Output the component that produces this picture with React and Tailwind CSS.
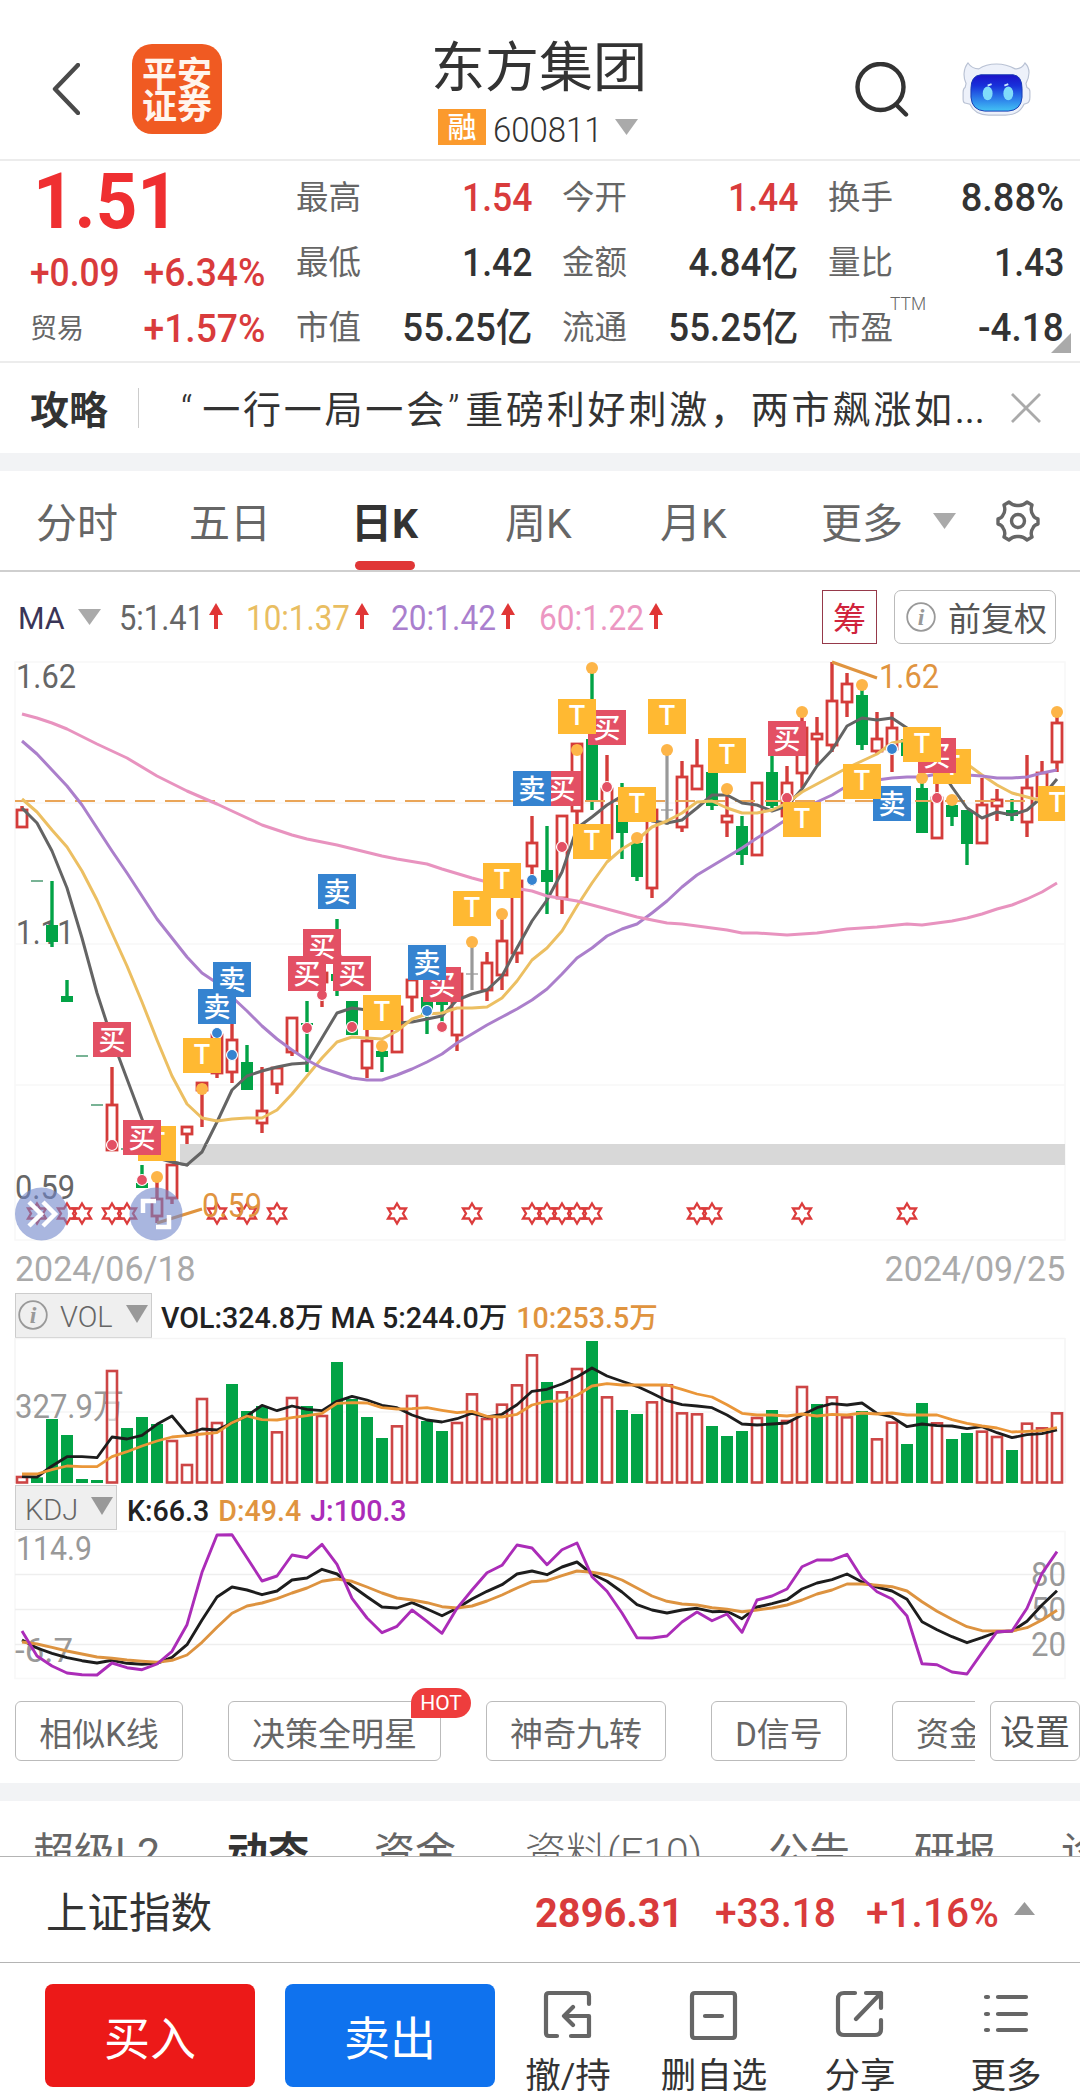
import React from "react";

const RED = "#d43c3a";
const GREEN = "#02a346";

const quotes = [
  { label: "最高", value: "1.54", color: "text-[#d93b3c]", scale: "scale-x-[0.91]" },
  { label: "今开", value: "1.44", color: "text-[#d93b3c]", scale: "scale-x-[0.91]" },
  { label: "换手", value: "8.88%", color: "text-[#333]", scale: "scale-x-[0.975]" },
  { label: "最低", value: "1.42", color: "text-[#333]", scale: "scale-x-[0.91]" },
  { label: "金额", value: "4.84亿", color: "text-[#333]", scale: "scale-x-[0.945]" },
  { label: "量比", value: "1.43", color: "text-[#333]", scale: "scale-x-[0.91]" },
  { label: "市值", value: "55.25亿", color: "text-[#333]", scale: "scale-x-[0.94]" },
  { label: "流通", value: "55.25亿", color: "text-[#333]", scale: "scale-x-[0.94]" },
  { label: "市盈", value: "-4.18", color: "text-[#333]", scale: "scale-x-[0.945]", sup: "TTM" },
];

// [high, top, bottom, low, type]  r = up, g = down, x = doji, - = limit line
const candles = [
  [166, 169, 187, 187, "r"], [241, 241, 241, 241, "-"], [241, 285, 302, 307, "g"], [340, 356, 362, 362, "g"],
  [416, 416, 416, 416, "-"], [465, 465, 465, 465, "-"], [427, 464, 510, 510, "r"], [509, 509, 509, 509, "-"],
  [525, 543, 548, 548, "g"], [540, 558, 576, 583, "r"], [524, 524, 558, 564, "r"], [486, 486, 494, 504, "r"],
  [442, 442, 450, 487, "r"], [393, 394, 433, 438, "r"], [380, 399, 432, 443, "r"], [405, 422, 450, 450, "g"],
  [427, 470, 483, 493, "r"], [426, 427, 444, 454, "r"], [377, 377, 412, 416, "r"], [361, 383, 385, 432, "g"],
  [315, 332, 342, 367, "r"], [279, 334, 341, 356, "g"], [361, 361, 395, 395, "g"], [388, 400, 428, 438, "r"],
  [406, 411, 417, 432, "g"], [366, 366, 412, 412, "r"], [339, 339, 357, 372, "r"], [357, 357, 375, 394, "g"],
  [355, 360, 365, 392, "g"], [333, 333, 395, 411, "r"], [302, 334, 334, 350, "x"], [312, 322, 350, 361, "r"],
  [274, 300, 335, 350, "r"], [240, 240, 313, 323, "r"], [176, 202, 226, 246, "r"], [186, 230, 242, 274, "g"],
  [175, 175, 258, 274, "r"], [103, 103, 171, 185, "r"], [28, 99, 160, 170, "g"], [115, 148, 198, 198, "r"],
  [143, 165, 193, 219, "g"], [198, 203, 237, 241, "g"], [169, 169, 248, 258, "r"], [110, 170, 170, 185, "x"],
  [121, 136, 187, 192, "r"], [99, 125, 149, 149, "r"], [132, 132, 166, 170, "g"], [149, 175, 182, 197, "r"],
  [176, 186, 215, 225, "g"], [142, 142, 215, 215, "r"], [115, 132, 166, 168, "g"], [126, 142, 176, 176, "r"],
  [72, 87, 133, 148, "r"], [77, 93, 99, 125, "r"], [22, 60, 105, 112, "r"], [33, 43, 62, 77, "r"],
  [45, 55, 105, 110, "g"], [72, 98, 111, 114, "r"], [72, 87, 109, 132, "r"], [99, 99, 116, 116, "g"],
  [138, 148, 193, 193, "g"], [140, 157, 198, 198, "r"], [160, 165, 177, 186, "g"], [170, 170, 204, 225, "g"],
  [138, 164, 203, 203, "r"], [149, 159, 166, 181, "r"], [159, 170, 176, 181, "g"], [115, 147, 182, 197, "r"],
  [121, 132, 156, 160, "r"], [72, 82, 122, 132, "r"],
];

const ma5 = "22,168 37,183 52,211 67,248 82,298 97,353 112,399 127,439 142,479 157,518 172,522 187,525 202,512 217,482 232,450 247,436 262,431 277,427 292,424 307,423 322,398 337,373 352,368 367,370 382,378 397,383 412,382 427,379 442,376 457,360 472,354 487,350 502,336 517,308 532,281 547,260 562,232 577,188 592,177 607,165 622,156 637,165 652,181 667,183 682,180 697,168 712,155 727,155 742,163 757,165 772,171 787,166 802,149 817,126 832,110 847,86 862,78 877,80 892,78 907,88 922,104 937,124 952,147 967,168 982,178 997,172 1012,175 1027,170 1042,157 1057,139";
const ma10 = "22,159 37,172 52,190 67,207 82,231 97,260 112,293 127,326 142,362 157,400 172,436 187,464 202,478 217,481 232,479 247,478 262,478 277,470 292,454 307,436 322,418 337,402 352,397 367,398 382,399 397,391 412,379 427,374 442,373 457,368 472,368 487,367 502,358 517,341 532,320 547,308 562,291 577,266 592,243 607,222 622,209 637,200 652,187 667,181 682,173 697,162 712,161 727,168 742,173 757,173 772,170 787,163 802,152 817,144 832,136 847,128 862,121 877,114 892,103 907,100 922,102 937,108 952,116 967,124 982,135 997,145 1012,153 1027,157 1042,161";
const ma20 = "22,101 37,114 52,130 67,146 82,165 97,188 112,211 127,233 142,256 157,279 172,298 187,317 202,333 217,343 232,357 247,371 262,386 277,399 292,410 307,420 322,428 337,433 352,438 367,440 382,440 397,435 412,429 427,422 442,414 457,403 472,394 487,385 502,377 517,369 532,360 547,349 562,334 577,318 592,308 607,296 622,289 637,284 652,273 667,261 682,247 697,235 712,226 727,217 742,208 757,198 772,189 787,179 802,169 817,162 832,155 847,146 862,142 877,140 892,138 907,137 922,137 937,134 952,134 967,135 982,136 997,138 1012,138 1027,137 1042,133 1057,130";
const ma60 = "22,74 37,78 52,83 67,89 97,104 127,118 157,136 187,151 217,164 232,171 262,185 292,195 307,199 337,205 382,216 397,219 427,224 442,229 472,238 502,246 532,251 547,256 577,261 607,269 637,277 667,283 682,284 727,290 742,293 757,293 787,295 817,293 847,289 877,287 907,284 922,285 952,281 967,278 982,274 997,269 1012,265 1027,259 1042,252 1057,243";

// [index, y, kind]  b = buy, s = sell, t = T trade
const dots = [
  [6, 505, "b"], [8, 540, "b"], [9, 537, "t"], [12, 449, "t"], [13, 393, "s"], [14, 415, "s"], [19, 388, "b"],
  [20, 355, "b"], [21, 317, "b"], [22, 387, "b"], [24, 406, "t"], [27, 371, "s"], [28, 387, "b"], [30, 302, "t"],
  [32, 274, "t"], [34, 240, "s"], [36, 207, "b"], [37, 110, "t"], [38, 28, "t"], [39, 147, "b"], [41, 198, "t"],
  [43, 110, "t"], [47, 149, "t"], [51, 158, "b"], [52, 72, "t"], [56, 45, "t"], [58, 109, "s"], [60, 138, "t"],
  [61, 158, "b"], [62, 160, "t"], [69, 72, "t"],
];

const tags = [
  [69, 163, "t"], [62, 126, "t"], [61, 115, "b"], [60, 104, "t"], [58, 163, "s"], [56, 141, "t"], [52, 179, "t"],
  [51, 98, "b"], [47, 115, "t"], [43, 76, "t"], [41, 164, "t"], [39, 87, "b"], [38, 201, "t"], [37, 76, "t"],
  [36, 148, "b"], [34, 148, "s"], [32, 240, "t"], [30, 268, "t"], [28, 344, "b"], [27, 322, "s"], [24, 372, "t"],
  [22, 333, "b"], [21, 251, "s"], [20, 306, "b"], [19, 333, "b"], [14, 339, "s"], [13, 366, "s"], [12, 415, "t"],
  [9, 503, "t"], [8, 497, "b"], [6, 399, "b"],
];
const tagFill = { b: "#e35064", s: "#3583d0", t: "#ffb932" };
const tagText = { b: "买", s: "卖", t: "T" };

const stars = [1, 3, 4, 6, 7, 13, 15, 17, 25, 30, 34, 35, 36, 37, 38, 45, 46, 52, 59];

const volTops = [588, 592, 417, 465, 597, 600, 270, 444, 411, 432, 480, 552, 354, 426, 312, 393, 378, 454, 351, 378, 405, 246, 357, 411, 474, 436, 345, 423, 453, 426, 340, 414, 371, 313, 223, 306, 334, 264, 183, 349, 390, 402, 364, 313, 397, 400, 438, 468, 453, 411, 390, 420, 318, 372, 349, 409, 393, 475, 425, 492, 369, 427, 477, 459, 452, 468, 510, 428, 442, 397];
const volUp = [0, 6, 10, 11, 12, 13, 17, 18, 20, 25, 26, 29, 30, 31, 32, 33, 34, 36, 37, 39, 42, 43, 44, 45, 49, 51, 52, 54, 55, 57, 58, 61, 64, 65, 67, 68, 69];
const volMa5 = [590, 591, 558, 530, 530, 533, 471, 477, 466, 433, 408, 462, 447, 450, 428, 408, 376, 392, 378, 388, 392, 364, 349, 360, 376, 383, 405, 420, 426, 416, 400, 411, 403, 374, 334, 328, 312, 291, 264, 288, 304, 319, 340, 362, 374, 378, 383, 405, 432, 435, 432, 429, 405, 383, 371, 375, 369, 400, 411, 440, 432, 437, 438, 446, 440, 458, 473, 464, 461, 450];
const volMa10 = [582, 582, 569, 558, 560, 560, 530, 515, 498, 483, 471, 467, 462, 458, 428, 408, 419, 420, 413, 407, 400, 370, 368, 369, 383, 387, 386, 383, 391, 398, 394, 409, 411, 403, 375, 364, 363, 346, 318, 311, 315, 315, 315, 315, 328, 342, 351, 374, 400, 405, 405, 408, 402, 408, 403, 405, 399, 402, 399, 405, 405, 405, 419, 430, 438, 444, 456, 454, 452, 443];

const kLine = [1080, 1104, 1120, 1133, 1142, 1149, 1141, 1150, 1153, 1150, 1132, 1094, 1020, 951, 921, 930, 944, 933, 900, 894, 868, 882, 918, 950, 981, 984, 968, 987, 1007, 985, 957, 934, 914, 882, 873, 884, 861, 846, 882, 904, 936, 974, 990, 999, 990, 985, 995, 994, 1016, 981, 971, 959, 927, 909, 899, 882, 906, 921, 933, 958, 1025, 1049, 1070, 1088, 1073, 1056, 1053, 1024, 975, 932];
const dLine = [1086, 1092, 1102, 1113, 1122, 1131, 1135, 1140, 1144, 1147, 1141, 1125, 1087, 1042, 1000, 978, 969, 956, 939, 924, 904, 897, 904, 921, 939, 954, 960, 968, 980, 984, 978, 963, 945, 924, 905, 902, 887, 873, 877, 884, 900, 924, 948, 964, 972, 975, 983, 988, 995, 990, 984, 975, 960, 942, 930, 912, 912, 916, 920, 933, 965, 994, 1018, 1040, 1052, 1053, 1053, 1043, 1020, 991];
const jLine = [1053, 1128, 1158, 1179, 1184, 1185, 1149, 1163, 1169, 1152, 1114, 1034, 877, 765, 764, 833, 903, 888, 825, 833, 793, 853, 955, 1014, 1058, 1039, 990, 1024, 1060, 985, 930, 878, 856, 795, 804, 854, 809, 789, 890, 934, 999, 1073, 1074, 1068, 1026, 996, 1022, 1002, 1057, 960, 948, 927, 860, 840, 840, 823, 894, 935, 957, 1008, 1151, 1154, 1176, 1182, 1118, 1055, 1053, 985, 880, 815];

const cx = (i) => 22 + i * 15;
const toPoints = (arr) => arr.map((v, i) => `${cx(i)},${(v / 3).toFixed(1)}`).join(" ");

const Caret = ({ className, up }) => (
  <svg viewBox="0 0 22 16" preserveAspectRatio="none" className={className}>
    <path d={up ? "M0 16H22L11 0Z" : "M0 0H22L11 16Z"} fill="currentColor" />
  </svg>
);

const InfoIcon = ({ className }) => (
  <svg viewBox="0 0 30 30" className={className}>
    <circle cx="15" cy="15" r="13.8" fill="none" stroke="currentColor" strokeWidth="1.8" />
    <text x="15" y="23" textAnchor="middle" fontSize="24" fontStyle="italic" fontWeight="bold" fontFamily="Liberation Serif, serif" fill="currentColor">i</text>
  </svg>
);

const Header = () => (
  <header className="flex h-[161px] border-b-2 border-[#ececec] pt-[36px]">
    <svg viewBox="0 0 28 52" className="ml-[52px] mt-[27px] h-[52px] w-[28px]">
      <path d="M26 2L3 26L26 50" fill="none" stroke="#4a4a4a" strokeWidth="4.4" strokeLinecap="round" strokeLinejoin="round" />
    </svg>
    <div className="ml-[52px] mt-[8px] flex h-[90px] w-[90px] flex-col items-center justify-center rounded-[20px] bg-[#f05a22] pt-[5px] text-[35px] leading-[32px] font-bold text-[#fff5ee]">
      <span>平安</span>
      <span>证券</span>
    </div>
    <div className="ml-[198px] flex w-[238px] flex-col items-center">
      <h1 className="h-[63px] pt-[3px] text-[54px] leading-[60px] text-[#333]">东方集团</h1>
      <div className="mt-[10px] flex h-[36px] w-full items-center pl-[18px]">
        <span className="flex h-[36px] w-[48px] shrink-0 items-center justify-center bg-[#fb9a2d] pt-[2px] text-[29px] leading-none font-medium text-white">融</span>
        <span className="mt-[7px] ml-[7px] w-[114px] origin-left scale-x-[0.94] text-[35px] leading-none font-light text-[#333]">600811</span>
        <Caret className="ml-[8px] h-[16px] w-[23px] shrink-0 text-[#aaa]" />
      </div>
    </div>
    <svg viewBox="0 0 54 56" className="ml-[197px] mt-[26px] h-[56px] w-[54px]" fill="none" stroke="#333" strokeWidth="4.4" strokeLinecap="round">
      <circle cx="25.5" cy="25" r="23" />
      <path d="M41.500 43L51 52.500" />
    </svg>
    <svg viewBox="0 0 70 56" className="ml-[53px] mt-[26px] h-[55px] w-[69px]">
      <defs>
        <linearGradient id="face" x1="0" y1="0" x2="0" y2="1">
          <stop offset="0" stopColor="#1c12c8" />
          <stop offset="0.3" stopColor="#1830da" />
          <stop offset="0.65" stopColor="#2b7cea" />
          <stop offset="1" stopColor="#43c3f4" />
        </linearGradient>
      </defs>
      <path d="M6 1C1 7 1 16 4 22L3 26Q1 27 1 31V38Q1 42 4 42L8 43Q13 54 27 54H44Q58 54 63 43L66 42Q69 41 69 36V30Q69 27 66 26L65 22C69 14 69 6 64 1Q61 7 54 7Q45 2 35 2Q24 2 17 7Q10 7 6 1Z" fill="#edf1fa" stroke="#b9c2d4" strokeWidth="1.2" />
      <path d="M19 13H52Q61 14 61 27V36Q60 49 47 50H23Q10 49 9 36V27Q9 14 19 13Z" fill="url(#face)" stroke="#173bb3" strokeWidth="1" />
      <ellipse cx="26" cy="32" rx="5" ry="7" fill="#7fdcfa" />
      <ellipse cx="47" cy="32" rx="5" ry="7" fill="#7fdcfa" />
      <path d="M26 24L30 22.500M43 24L47 22.500" stroke="#cbeaff" strokeWidth="2" />
    </svg>
  </header>
);

const Quote = () => (
  <section className="relative flex h-[202px] border-b-2 border-[#ececec] pl-[30px]">
    <div className="w-[267px]">
      <div className="h-[85px] pt-[2px] pl-[3px]">
        <span className="inline-block origin-left scale-x-[0.93] text-[78px] leading-[78px] font-bold text-[#ef2f31]">1.51</span>
      </div>
      <div className="flex h-[55px] w-[235px] items-center justify-between text-[38px] font-medium text-[#d93b3c]">
        <span className="origin-left scale-x-[0.93]">+0.09</span>
        <span className="origin-right scale-x-[0.98]">+6.34%</span>
      </div>
      <div className="flex h-[56px] w-[235px] items-center justify-between">
        <span className="pt-[1px] text-[27px] text-[#666]">贸易</span>
        <span className="origin-right scale-x-[0.98] text-[38px] font-medium text-[#d93b3c]">+1.57%</span>
      </div>
    </div>
    <div className="grid w-[767px] grid-cols-[235px_235px_235px] grid-rows-[65px_65px_65px] gap-x-[31px] pt-[5px]">
      {quotes.map((q) => (
        <div key={q.label} className="flex items-center justify-between">
          <span className="relative -ml-[1px] text-[32.500px] text-[#666]">
            {q.label}
            {q.sup && <sup className="absolute top-0 left-[62px] text-[17.500px] font-light">{q.sup}</sup>}
          </span>
          <span className={`origin-right text-[39px] font-medium ${q.scale} ${q.color}`}>{q.value}</span>
        </div>
      ))}
    </div>
    <svg viewBox="0 0 20 20" className="absolute right-[9px] bottom-[8px] h-[20px] w-[20px]">
      <path d="M20 0V20H0Z" fill="#aaa" />
    </svg>
  </section>
);

const News = () => (
  <section className="flex h-[90px] items-center pl-[30px]">
    <b className="w-[78px] pt-[6px] text-[39px] leading-none whitespace-nowrap text-[#333]">攻略</b>
    <i className="ml-[30px] h-[40px] w-[1px] bg-[#ccc]" />
    <p className="ml-[42px] w-[812px] pt-[4px] text-[38px] leading-[50px] tracking-[2.8px] whitespace-nowrap text-[#333]">
      <span className="mr-[7px] font-light">“</span>一行一局一会<span className="mr-[3px] ml-[1px] font-light">”</span>重磅利好刺激，两市飙涨如<span className="tracking-[0px]">...</span>
    </p>
    <svg viewBox="0 0 32 32" className="ml-[17px] h-[32px] w-[32px]">
      <path d="M2 2L30 30M30 2L2 30" stroke="#aaa" strokeWidth="2.8" />
    </svg>
  </section>
);

const Periods = () => (
  <nav className="relative flex h-[101px] items-center border-b-2 border-[#cfcfcf] text-[41px] leading-none whitespace-nowrap text-[#666]">
    <span className="ml-[36px] w-[153px] pt-[7px]">分时</span>
    <span className="w-[162px] pt-[7px]">五日</span>
    <span className="w-[154px] pt-[7px] font-bold text-[#333]">日K</span>
    <span className="w-[155px] pt-[7px]">周K</span>
    <span className="w-[161px] pt-[7px]">月K</span>
    <span className="w-[112px] pt-[7px]">更多</span>
    <Caret className="h-[16px] w-[23px] text-[#aaa]" />
    <svg viewBox="0 0 44 44" className="ml-[40px] h-[44px] w-[44px]" fill="none" stroke="#666" strokeWidth="3.4" strokeLinejoin="round">
      <path d="M13 3Q17 7 22 6.500Q27 7 31 3L36 6Q34 12 37 16Q38 19 42 20V25Q38 26 37 29Q34 33 36 38L31 41Q27 37 22 37.500Q17 37 13 41L8 38Q10 33 7 29Q6 26 2 25V20Q6 19 7 16Q10 12 8 6Z" />
      <circle cx="22" cy="22" r="6.500" />
    </svg>
    <i className="absolute bottom-0 left-[355px] h-[9px] w-[60px] rounded-full bg-[#e03636]" />
  </nav>
);

const maItems = [
  { text: "5:1.41", color: "text-[#666]", box: "w-[127px]", len: 85 },
  { text: "10:1.37", color: "text-[#e9be62]", box: "w-[145px]", len: 104 },
  { text: "20:1.42", color: "text-[#aa7fce]", box: "w-[148px]", len: 105 },
  { text: "60:1.22", color: "text-[#ec97c2]", box: "w-[281px]", len: 105 },
];

const MaBar = () => (
  <div className="flex h-[88px] items-center pt-[1px]">
    <span className="ml-[18px] w-[60px] origin-left scale-x-[0.95] pt-[3px] text-[32px] leading-none text-[#3a3557]">MA</span>
    <Caret className="mr-[20px] h-[16px] w-[23px] text-[#aaa]" />
    {maItems.map((m) => (
      <div key={m.text} className={`flex items-center ${m.color} ${m.box}`}>
        <svg className="h-[36px] w-[128px] shrink-0 overflow-visible">
          <text x="-2" y="30.500" fontSize="35" textLength={m.len} lengthAdjust="spacingAndGlyphs" fill="currentColor">{m.text}</text>
          <path d={`M${m.len + 10} 30V12`} stroke="#e03636" strokeWidth="4" />
          <path d={`M${m.len + 3} 16L${m.len + 10} 4L${m.len + 17} 16Z`} fill="#e03636" />
        </svg>
      </div>
    ))}
    <span className="flex h-[54px] w-[55px] shrink-0 items-center justify-center border-[1.500px] border-[#96394a] pt-[5px] text-[33px] leading-none text-[#d0233c]">筹</span>
    <span className="ml-[17px] flex h-[54px] w-[162px] shrink-0 items-center rounded-[7px] border border-[#bbb] pl-[11px] text-[33px] leading-none whitespace-nowrap text-[#555]">
      <InfoIcon className="mr-[12px] h-[30px] w-[30px] shrink-0 text-[#999]" />
      <span className="pt-[5px]">前复权</span>
    </span>
  </div>
);

const Candle = ({ i, c }) => {
  const [high, top, bottom, low, type] = c;
  const x = cx(i);
  if (type === "-") return <path d={`M${x - 6} ${top}H${x + 6}`} stroke="#2f8a5c" strokeWidth="1.300" />;
  if (type === "x") {
    return (
      <g stroke="#999">
        <path d={`M${x} ${high}V${low}`} strokeWidth="3.200" />
        <path d={`M${x - 6} ${top}H${x + 6}`} strokeWidth="1.300" />
      </g>
    );
  }
  if (type === "g") {
    return (
      <g fill={GREEN}>
        <rect x={x - 1.7} y={high} width="3.400" height={low - high} />
        <rect x={x - 6} y={top} width="12" height={bottom - top} />
      </g>
    );
  }
  return (
    <g>
      <rect x={x - 1.7} y={high} width="3.400" height={low - high} fill={RED} />
      <rect x={x - 5} y={top + 1} width="10" height={bottom - top - 1} fill="#fff" stroke={RED} strokeWidth="2.800" />
    </g>
  );
};

const PriceChart = () => (
  <svg viewBox="0 20 1080 582" className="block h-[582px] w-[1080px]">
    <path d="M15 22H1065V600H15ZM15 163H1065M15 304H1065M15 445H1065" fill="none" stroke="#f8f8f8" strokeWidth="1.500" />
    <g fontSize="34" fill="#666">
      <text x="16" y="48" textLength="60" lengthAdjust="spacingAndGlyphs">1.62</text>
      <text x="16" y="304" textLength="58" lengthAdjust="spacingAndGlyphs">1.11</text>
      <text x="15" y="559" textLength="60" lengthAdjust="spacingAndGlyphs">0.59</text>
    </g>
    {candles.map((c, i) => <Candle key={i} i={i} c={c} />)}
    <path d="M15 161H1065" stroke="#eaa558" strokeWidth="2" strokeDasharray="20 10" />
    <g fill="none" strokeWidth="3" strokeLinejoin="round">
      <polyline points={ma5} stroke="#646464" />
      <polyline points={ma10} stroke="#ecbf62" />
      <polyline points={ma20} stroke="#ab7fcb" />
      <polyline points={ma60} stroke="#e893bf" />
    </g>
    <rect x="180" y="504" width="885" height="21" fill="#d8d8d8" />
    <path d="M172 522L187 525L202 512L206 504" fill="none" stroke="#646464" strokeWidth="3" />
    {stars.map((i) => (
      <path key={i} transform={`translate(${cx(i)} 573.500)`} d="M0 -10L3 -5H9L6 0L9 5H3L0 10L-3 5H-9L-6 0L-9 -5H-3Z" fill="none" stroke="#dc3c3c" strokeWidth="2.300" />
    ))}
    <path d="M832 22L877 38M157 583L202 569" fill="none" stroke="#e0943f" strokeWidth="3" />
    <g fontSize="34" fill="#e0943f">
      <text x="879" y="48" textLength="60" lengthAdjust="spacingAndGlyphs">1.62</text>
      <text x="202" y="577" textLength="60" lengthAdjust="spacingAndGlyphs">0.59</text>
    </g>
    {dots.map(([i, y, k]) => (
      <circle key={i} cx={cx(i)} cy={y} r={k === "t" ? 6 : 5.5} fill={k === "t" ? "#fdb548" : tagFill[k]} stroke={k === "t" ? "none" : "#fff"} strokeWidth="1.200" />
    ))}
    <clipPath id="plot"><rect x="15" y="20" width="1050" height="582" /></clipPath>
    <g clipPath="url(#plot)">
      {tags.map(([i, y, k]) => (
        <g key={i}>
          <rect x={cx(i) - 19} y={y - 17} width="38" height="35" fill={tagFill[k]} />
          <text x={cx(i)} y={k === "t" ? y + 9 : y + 11} textAnchor="middle" fontSize="27" fontWeight="500" fill="#fff">{tagText[k]}</text>
        </g>
      ))}
    </g>
    <g fill="#6f86c9" fillOpacity="0.600">
      <circle cx="41.500" cy="574" r="26.500" />
      <circle cx="156" cy="574" r="26.500" />
    </g>
    <g fill="none" stroke="#fff" strokeWidth="4.500">
      <path d="M29 562L41 574L29 586M43 562L55 574L43 586" />
      <path d="M143 573V561H156M169 575V587H156" />
    </g>
  </svg>
);

const VolumeChart = () => (
  <svg viewBox="0 57 1080 148" className="block h-[148px] w-[1080px]">
    <path d="M15 58.500H1065M15 132H1065M15 58V203M1065 58V203" stroke="#f5f5f5" strokeWidth="1.500" />
    <text x="15" y="138" fontSize="34" fill="#999" textLength="109" lengthAdjust="spacingAndGlyphs">327.9万</text>
    {volTops.map((t, i) =>
      volUp.includes(i) ? (
        <rect key={i} x={cx(i) - 5} y={t / 3 + 1} width="10" height={201.500 - t / 3} fill="#fff" fillOpacity="0.600" stroke="#cd4545" strokeWidth="2.600" />
      ) : (
        <rect key={i} x={cx(i) - 6} y={t / 3} width="12" height={203 - t / 3} fill={GREEN} />
      )
    )}
    <g fill="none" strokeWidth="2.800" strokeLinejoin="round">
      <polyline points={toPoints(volMa5)} stroke="#1d1d1d" />
      <polyline points={toPoints(volMa10)} stroke="#ea9638" />
    </g>
  </svg>
);

const KdjChart = () => (
  <svg viewBox="0 250 1080 150" className="block h-[150px] w-[1080px]">
    <path d="M15 251.500H1065V398.500H15Z" fill="none" stroke="#f8f8f8" strokeWidth="1.500" />
    <path d="M15 294.500H1065M15 329.500H1065M15 364.500H1065" stroke="#eee" strokeWidth="1.500" />
    <g fontSize="34" fill="#999">
      <text x="16" y="280" textLength="76" lengthAdjust="spacingAndGlyphs">114.9</text>
      <text x="15" y="382" textLength="58" lengthAdjust="spacingAndGlyphs">-6.7</text>
      <text x="1031" y="306" textLength="35" lengthAdjust="spacingAndGlyphs">80</text>
      <text x="1031" y="341" textLength="35" lengthAdjust="spacingAndGlyphs">50</text>
      <text x="1031" y="376" textLength="35" lengthAdjust="spacingAndGlyphs">20</text>
    </g>
    <g fill="none" strokeWidth="2.900" strokeLinejoin="round">
      <polyline points={toPoints(kLine)} stroke="#1d1d1d" />
      <polyline points={toPoints(dLine)} stroke="#dd9340" />
      <polyline points={toPoints(jLine)} stroke="#ab2cb8" />
    </g>
  </svg>
);

const Chips = () => (
  <section className="flex h-[103px] pt-[21px] pl-[15px] text-[33px] whitespace-nowrap text-[#666]">
    <div className="flex w-[960px] shrink-0 gap-[45px] overflow-x-clip">
      <span className="flex h-[60px] w-[168px] shrink-0 items-center justify-center rounded-[6px] border border-[#bbb] pt-[7px]">相似K线</span>
      <span className="relative flex h-[60px] w-[213px] shrink-0 items-center justify-center rounded-[6px] border border-[#bbb] pt-[7px]">
        决策全明星
        <em className="absolute -top-[14px] left-[182px] flex h-[30px] w-[60px] items-center justify-center rounded-full rounded-bl-none bg-[#ee3d3d] pt-[1px] text-[21px] text-white not-italic">HOT</em>
      </span>
      <span className="flex h-[60px] w-[180px] shrink-0 items-center justify-center rounded-[6px] border border-[#bbb] pt-[7px]">神奇九转</span>
      <span className="flex h-[60px] w-[136px] shrink-0 items-center justify-center rounded-[6px] border border-[#bbb] pt-[7px]">D信号</span>
      <span className="flex h-[60px] w-[180px] shrink-0 items-center rounded-[6px] border border-[#bbb] pt-[7px] pl-[23px]">资金博弈</span>
    </div>
    <span className="ml-[15px] flex h-[60px] w-[90px] shrink-0 items-center justify-center rounded-[6px] border border-[#bbb] pt-[7px] text-[35px] text-[#555]">设置</span>
  </section>
);

const InfoTabs = () => (
  <nav className="flex h-[55px] overflow-hidden pt-[28px] text-[41px] leading-[48px] whitespace-nowrap text-[#666]">
    <span className="ml-[33px] w-[194px] shrink-0">超级L2</span>
    <b className="w-[147px] shrink-0 text-[#333]">动态</b>
    <span className="w-[151px] shrink-0">资金</span>
    <span className="w-[243px] shrink-0 font-light">资料(F10)</span>
    <span className="w-[146px] shrink-0">公告</span>
    <span className="w-[147px] shrink-0">研报</span>
    <span className="shrink-0">诊股</span>
  </nav>
);

const IndexBar = () => (
  <section className="flex h-[107px] items-center border-y border-[#b4b4b4] pt-[8px] text-[41px] font-medium whitespace-nowrap text-[#d93b3c]">
    <span className="ml-[46px] w-[489px] pt-[1px] text-[41.500px] font-normal text-[#333]">上证指数</span>
    <span className="w-[180px] origin-left scale-x-[0.97] font-bold">2896.31</span>
    <span className="w-[151px] origin-left scale-x-[0.95]">+33.18</span>
    <span className="w-[148px] origin-left scale-x-[0.99]">+1.16%</span>
    <Caret up className="mb-[10px] h-[13px] w-[21px] text-[#999]" />
  </section>
);

const actions = [
  {
    name: "撤/持",
    icon: <path d="M46 14V6Q46 3 43 3H6Q3 3 3 6V43Q3 46 6 46H14M28 46H46V26H21M30 17L21 26L30 35" />,
  },
  {
    name: "删自选",
    icon: <path d="M6 3H43Q46 3 46 6V45Q46 48 43 48H6Q3 48 3 45V6Q3 3 6 3ZM16 26H33" />,
  },
  {
    name: "分享",
    icon: <path d="M20 3H9Q3 3 3 9V39Q3 45 9 45H40Q46 45 46 39V30M31 3H46V18M46 3L21 29" />,
  },
  {
    name: "更多",
    icon: <path d="M5 7H7M5 24H7M5 40H7M17 7H45M17 24H45M17 40H45" />,
  },
];

const TradeBar = () => (
  <footer className="flex h-[132px] pt-[21px] pl-[45px]">
    <button className="flex h-[103px] w-[210px] shrink-0 items-center justify-center rounded-[8px] bg-[#ec1918] pt-[8px] text-[46px] text-white">买入</button>
    <button className="ml-[30px] flex h-[103px] w-[210px] shrink-0 items-center justify-center rounded-[8px] bg-[#0f72ee] pt-[8px] text-[46px] text-white">卖出</button>
    <div className="flex whitespace-nowrap">
      {actions.map((a) => (
        <div key={a.name} className="flex w-[146px] flex-col items-center pt-[6px]">
          <svg viewBox="0 0 50 50" className="h-[50px] w-[50px] shrink-0" fill="none" stroke="#666" strokeWidth="4.200" strokeLinecap="round" strokeLinejoin="round">
            {a.icon}
          </svg>
          <span className="mt-[14px] text-[35.500px] leading-[44px] text-[#333]">{a.name}</span>
        </div>
      ))}
    </div>
  </footer>
);

const App = () => {
  return (
    <div className="h-[2095px] w-[1080px] overflow-hidden bg-white font-['Roboto','Noto_Sans_CJK_SC',sans-serif] text-[#333]">
      <Header />
      <Quote />
      <News />
      <div className="h-[18px] bg-[#f2f3f5]" />
      <Periods />
      <MaBar />
      <PriceChart />
      <div className="flex h-[51px] items-center justify-between px-[15px] pt-[6px] text-[35px] text-[#aaa]">
        <span className="origin-left scale-x-[0.97]">2024/06/18</span>
        <span className="origin-right scale-x-[0.97]">2024/09/25</span>
      </div>

      <div className="flex h-[44px] items-center pl-[15px] text-[28.600px] font-medium whitespace-nowrap text-[#222]">
        <div className="flex h-[45px] w-[137px] items-center border border-[#ccc] bg-[#efefef] text-[29px] font-light text-[#666]">
          <InfoIcon className="ml-[2px] h-[30px] w-[30px] text-[#999]" />
          <span className="ml-[12px] w-[66px] pt-[5px]">VOL</span>
          <Caret className="mb-[3px] h-[18px] w-[22px] text-[#999]" />
        </div>
        <span className="ml-[9px] pt-[7px]">VOL:324.8万 MA 5:244.0万</span>
        <span className="ml-[9px] pt-[7px] text-[#e0943f]">10:253.5万</span>
      </div>
      <VolumeChart />
      <div className="flex h-[45px] items-center pl-[15px] text-[28.600px] font-medium whitespace-nowrap text-[#222]">
        <div className="flex h-[45px] w-[102px] items-center border border-[#ccc] bg-[#efefef] text-[29px] font-light text-[#666]">
          <span className="ml-[9px] w-[66px] pt-[6px]">KDJ</span>
          <Caret className="mb-[3px] h-[18px] w-[22px] text-[#999]" />
        </div>
        <span className="ml-[10px] pt-[7px]">K:66.3</span>
        <span className="ml-[9px] pt-[7px] text-[#e0943f]">D:49.4</span>
        <span className="ml-[9px] pt-[7px] text-[#ab2cb8]">J:100.3</span>
      </div>
      <KdjChart />

      <Chips />
      <div className="h-[18px] bg-[#f2f3f5]" />
      <InfoTabs />
      <IndexBar />
      <TradeBar />
    </div>
  );
};

export default App;
